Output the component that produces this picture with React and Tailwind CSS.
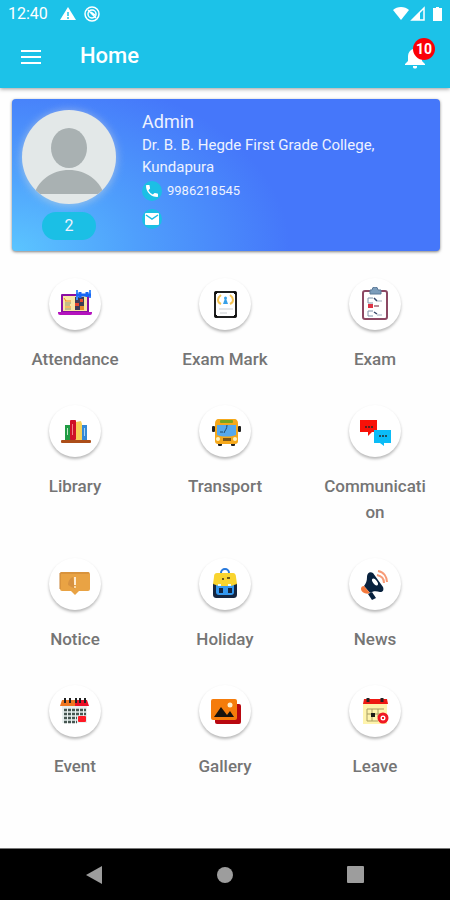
import React from "react";

function AttendanceIcon() {
  return (
    <svg viewBox="0 0 34 34" className="size-[34px]" aria-hidden="true">
      <rect x="3" y="7" width="28" height="19" rx="1" fill="#8a0fa3" />
      <rect x="5" y="9" width="24" height="15" fill="#f8e7a6" />
      <path d="M0 25h34v1a2 2 0 0 1-2 2H2a2 2 0 0 1-2-2z" fill="#b412bd" />
      <path d="M6 11l2 3M7 14h6M7 20h6" stroke="#f08a24" strokeWidth="1" fill="none" />
      <path d="M7 16h6M7 18h5M7 22h6" stroke="#8d9366" strokeWidth="1" />
      <rect x="17" y="10" width="9" height="13" fill="#3c3d55" />
      <path d="M17 16h4v3h-4zM22 12h3v3h-3z" fill="#e5482e" />
      <path d="M22 19h4v4h-4z" fill="#e98a2b" />
      <path d="M19 3v10M32 3v8" stroke="#3f8dfa" strokeWidth="2" />
      <path d="M18 8h15M22 5v6M29 5v5" stroke="#1766f5" strokeWidth="3" />
    </svg>
  );
}

function ExamMarkIcon() {
  return (
    <svg viewBox="0 0 34 34" className="size-[34px]" aria-hidden="true">
      <rect x="7" y="5" width="21" height="25" rx="1" fill="#fff" stroke="#202020" strokeWidth="2" />
      <path d="M7 5h3l-3 3zM28 5v3l-3-3zM7 30v-3l3 3zM28 30h-3l3-3z" fill="#111" stroke="#111" />
      <path d="M13 8c-4 3-4 7 0 9M22 8c4 3 4 7 0 9" stroke="#f6c453" strokeWidth="2" fill="none" />
      <circle cx="17.500" cy="11" r="1.500" fill="#38a1e8" />
      <path d="M15 17l2.500-7 2.500 7z" fill="#38a1e8" />
      <path d="M11 22h14M12 26h7" stroke="#c9cdd0" strokeWidth="1" />
    </svg>
  );
}

function ExamIcon() {
  return (
    <svg viewBox="0 0 34 34" className="size-[34px]" aria-hidden="true">
      <rect x="5" y="4" width="24" height="28" rx="2" fill="#fff" stroke="#8c4863" strokeWidth="2" />
      <path d="M12 3h2a3 3 0 0 1 6 0h3v4H12z" fill="#7c9dbb" stroke="#5d7a98" strokeWidth="1" />
      <path d="M15 11h-5v5h5M15 24h-5v5h5" stroke="#8095ab" fill="none" />
      <path d="M10 17h5v4h-5z" fill="#df3445" />
      <path d="M16 11l3 3M16 25l3 2" stroke="#354768" strokeWidth="1.500" />
      <path d="M16 19h5" stroke="#b98a95" strokeWidth="2" />
      <path d="M19 14h5M19 28h5" stroke="#9ba9bb" />
    </svg>
  );
}

function LibraryIcon() {
  return (
    <svg viewBox="0 0 34 34" className="size-[34px]" aria-hidden="true">
      <rect x="7" y="11" width="6" height="15" fill="#219c45" />
      <rect x="12" y="6" width="6" height="20" rx="1" fill="#ce1127" />
      <path d="M18 8l5-1 1 3v16h-6z" fill="#f7cf55" />
      <path d="M24 11h5v15h-5z" fill="#3488d6" />
      <path d="M9 14h1v7H9z" fill="#bce9c4" />
      <path d="M14 10h1v11h-1z" fill="#f47d87" />
      <path d="M26 14h1v8h-1z" fill="#a7d3f5" />
      <rect x="3" y="26" width="30" height="3" rx="1" fill="#ac4e19" />
    </svg>
  );
}

function TransportIcon() {
  return (
    <svg viewBox="0 0 34 34" className="size-[34px]" aria-hidden="true">
      <rect x="10" y="27" width="4" height="5" rx="1" fill="#202020" />
      <rect x="23" y="27" width="4" height="5" rx="1" fill="#202020" />
      <path d="M6 14h24" stroke="#d89018" strokeWidth="2" />
      <rect x="4" y="12" width="3" height="6" rx="1" fill="#222" />
      <rect x="30" y="12" width="3" height="6" rx="1" fill="#222" />
      <path d="M11 5h15c3 0 4 2 4 5v17c0 2-1 3-3 3H10c-2 0-3-1-3-3V10c0-3 1-5 4-5z" fill="#f5a81b" />
      <rect x="12" y="6" width="13" height="3" rx="1" fill="#79a51e" />
      <path d="M9 11h19v10c-6 2-13 2-19 0z" fill="#55a8ed" />
      <path d="M19 11c0 4-2 5-3 8M12 18h3" stroke="#214969" strokeWidth="1" fill="none" />
      <circle cx="10" cy="25" r="2" fill="#fff3be" />
      <circle cx="27" cy="25" r="2" fill="#fff3be" />
      <rect x="15" y="24" width="8" height="3" fill="#7b5618" />
    </svg>
  );
}

function CommunicationIcon() {
  return (
    <svg viewBox="0 0 34 34" className="size-[34px]" aria-hidden="true">
      <path d="M2 6h17v12h-5l-4 4v-4H2z" fill="#f81108" />
      <path d="M16 16h17v13h-7v3l-4-3h-6z" fill="#0bbcf7" />
      <path d="M7 13h8M21 22h8" stroke="#26282d" strokeWidth="1.500" strokeDasharray="2 1" />
    </svg>
  );
}

function NoticeIcon() {
  return (
    <svg viewBox="0 0 34 34" className="size-[34px]" aria-hidden="true">
      <path d="M3 5h27a2 2 0 0 1 2 2v15a2 2 0 0 1-2 2h-9l-4 4-4-4H4a2 2 0 0 1-2-2V7z" fill="#e9a344" />
      <path d="M2 22V6h29" fill="none" stroke="#c98334" strokeWidth="1" />
      <path d="M10 18c0-4 2-7 5-8l2 12z" fill="#d69140" />
      <path d="M17 10v8" stroke="#ffecd0" strokeWidth="2" />
      <path d="M17 19v2" stroke="#f9d8a8" strokeWidth="2" />
    </svg>
  );
}

function HolidayIcon() {
  return (
    <svg viewBox="0 0 34 34" className="size-[34px]" aria-hidden="true">
      <path d="M13 7V6a4 4 0 0 1 8 0v1" fill="none" stroke="#2879dc" strokeWidth="2" />
      <path d="M5 16h24v11c0 3-1 4-4 4H9c-3 0-4-1-4-4z" fill="#142641" />
      <path d="M8 18h18v7c0 2-1 3-3 3H11c-2 0-3-1-3-3z" fill="#3498ef" />
      <path d="M9 6h16c2 0 3 2 3 4l1 7-6 2H11l-6-2 1-7c0-3 1-4 3-4z" fill="#f9d42f" />
      <path d="M14 12h2M19 11h3" stroke="#6a591b" strokeWidth="2" />
      <path d="M10 17h3v2h-3zM20 17h3v2h-3z" fill="#e9fbff" />
      <rect x="11" y="21" width="4" height="5" fill="#142641" />
      <rect x="20" y="21" width="4" height="5" fill="#142641" />
    </svg>
  );
}

function NewsIcon() {
  return (
    <svg viewBox="0 0 34 34" className="size-[34px]" aria-hidden="true">
      <path d="M9 10c0-4 3-6 6-4l10 14c1 3 0 5-3 5-4-1-7-1-10 1l-6-7c2-3 3-5 3-9z" fill="#08213d" />
      <ellipse cx="17" cy="15" rx="2" ry="4" transform="rotate(-38 17 15)" fill="#fff" />
      <path d="M6 19l6 7c-4 2-9-1-9-4 0-2 1-3 3-3z" fill="#f5793b" />
      <path d="M10 27l4-2 4 6-4 2z" fill="#08213d" />
      <path d="M19 8c5 1 7 4 7 8M20 4c6 1 9 6 9 11" fill="none" stroke="#f79b77" strokeWidth="2" />
    </svg>
  );
}

function EventIcon() {
  return (
    <svg viewBox="0 0 34 34" className="size-[34px]" aria-hidden="true">
      <rect x="4" y="11" width="25" height="18" fill="#e9f0ef" />
      <path d="M4 6h13v6H2z" fill="#f07721" />
      <path d="M17 6h12l2 6H17z" fill="#eb1027" />
      <path d="M7 4v5M12 4v5M18 4v5M22 4v5M27 4v5" stroke="#222" strokeWidth="2" />
      <path d="M6 16h22M6 20h22M6 24h13M6 28h13" stroke="#465651" strokeWidth="2.500" strokeDasharray="3 1" />
      <rect x="20" y="22" width="8" height="6" rx="1" fill="#ff1925" />
    </svg>
  );
}

function GalleryIcon() {
  return (
    <svg viewBox="0 0 34 34" className="size-[34px]" aria-hidden="true">
      <rect x="7" y="10" width="26" height="20" rx="2" fill="#b90810" />
      <rect x="3" y="5" width="26" height="21" rx="2" fill="#f57c0b" />
      <circle cx="22" cy="11" r="2.500" fill="#fff0ce" />
      <path d="M6 23l7-10 6 8 3-4 4 6z" fill="#17130e" />
    </svg>
  );
}

function LeaveIcon() {
  return (
    <svg viewBox="0 0 34 34" className="size-[34px]" aria-hidden="true">
      <rect x="5" y="9" width="24" height="21" fill="#fff4ad" />
      <path d="M6 5h23l1 5H5z" fill="#ee1912" />
      <path d="M10 4v4M24 4v4" stroke="#242424" strokeWidth="3" />
      <path d="M9 15h17M9 15v12h11M9 20h17M14 15v12M20 15v8" fill="none" stroke="#a99f62" strokeWidth="1" />
      <rect x="13" y="19" width="4" height="4" fill="#1c1c16" />
      <circle cx="25" cy="24" r="4" fill="#fff" stroke="#f11822" strokeWidth="3" />
      <path d="M24 23l2 2M26 23l-2 2" stroke="#f11822" />
    </svg>
  );
}

const items = [
  { label: "Attendance", Icon: AttendanceIcon },
  { label: "Exam Mark", Icon: ExamMarkIcon },
  { label: "Exam", Icon: ExamIcon },
  { label: "Library", Icon: LibraryIcon },
  { label: "Transport", Icon: TransportIcon },
  { label: "Communication", Icon: CommunicationIcon },
  { label: "Notice", Icon: NoticeIcon },
  { label: "Holiday", Icon: HolidayIcon },
  { label: "News", Icon: NewsIcon },
  { label: "Event", Icon: EventIcon },
  { label: "Gallery", Icon: GalleryIcon },
  { label: "Leave", Icon: LeaveIcon },
];

function StatusBar() {
  return (
    <div className="flex h-7 items-center justify-between px-2">
      <div className="flex items-center gap-2">
        <span className="mr-1 text-base leading-5">12:40</span>
        <svg viewBox="0 0 16 16" className="size-4" aria-hidden="true">
          <path d="M8 1l8 13H0z" fill="currentColor" />
          <path d="M8 6v4M8 11v2" stroke="#1cc2e8" strokeWidth="1.500" />
        </svg>
        <svg viewBox="0 0 16 16" className="size-4" fill="none" stroke="currentColor" aria-hidden="true">
          <circle cx="8" cy="8" r="7" strokeWidth="1.500" />
          <circle cx="8" cy="8" r="4" strokeWidth="1.500" />
          <path d="M4 4l8 8M7 6l4 3" strokeWidth="1.500" />
        </svg>
      </div>
      <svg viewBox="0 0 50 16" className="h-4 w-[50px]" aria-hidden="true">
        <path d="M1 4c4-4 12-4 16 0L9 14z" fill="currentColor" />
        <path d="M20 14L32 2v12z" fill="none" stroke="currentColor" strokeWidth="1.500" />
        <path d="M20 14l8-8v8z" fill="currentColor" />
        <path d="M42 2h2V1h3v1h3v13h-9V2z" fill="currentColor" />
      </svg>
    </div>
  );
}

function AppBar() {
  return (
    <header className="relative bg-[#1cc2e8] text-white shadow-[0_1px_4px_rgba(0,0,0,0.4)]">
      <StatusBar />
      <div className="flex h-[60px] items-center pr-2.5 pb-1 pl-5">
        <button type="button" aria-label="Open menu" className="mr-9 flex h-10 w-6 items-center">
          <svg viewBox="0 0 24 18" className="h-[18px] w-6" aria-hidden="true">
            <path d="M1 4h20M1 10h20M1 16h20" stroke="currentColor" strokeWidth="2" />
          </svg>
        </button>
        <h1 className="flex-1 text-[22px] leading-7 font-medium">Home</h1>
        <button type="button" aria-label="Notifications" className="relative flex h-10 w-9 items-center">
          <svg viewBox="0 0 22 24" className="mt-1 h-6 w-[22px]" aria-hidden="true">
            <path d="M11 1c1 0 2 1 2 2 3 1 5 4 5 7v5l3 3v1H1v-1l3-3v-5c0-3 2-6 5-7 0-1 1-2 2-2zM9 20h4v1c0 2-4 2-4 0z" fill="currentColor" />
          </svg>
          <span className="absolute top-0.5 right-[5px] flex size-[22px] items-center justify-center rounded-full bg-[#fb0007] text-sm font-bold">10</span>
        </button>
      </div>
    </header>
  );
}

function ProfileCard() {
  return (
    <section className="mt-[11px] mr-2.5 ml-3 flex min-h-[152px] rounded-sm bg-[#4577fa] bg-[radial-gradient(ellipse_65%_120%_at_0%_100%,#5bc5ff_0%,#4f9ffc_45%,#4577fa_100%)] pt-[11px] pl-2.5 text-[#eef2ff] shadow-[0_1px_3px_rgba(0,0,0,0.5)]">
      <div className="flex w-[94px] shrink-0 flex-col items-center gap-2">
        <svg viewBox="0 0 94 94" className="size-[94px] rounded-full bg-[#e3e8e8] shadow-[0_1px_10px_rgba(220,220,220,0.6)]" role="img" aria-label="Profile picture">
          <ellipse cx="47" cy="38" rx="18" ry="20" fill="#a9b1b2" />
          <path d="M12 84c5-14 18-24 35-24s30 10 35 24z" fill="#a9b1b2" />
        </svg>
        <span className="flex h-7 w-[54px] items-center justify-center rounded-full bg-[#1bbfe5] text-base">2</span>
      </div>
      <div className="ml-[26px] min-w-0 flex-1 pr-4">
        <h2 className="text-lg leading-6">Admin</h2>
        <p className="text-[15px] leading-[22px]">Dr. B. B. Hegde First Grade College, Kundapura</p>
        <div className="mt-[3px] flex items-center gap-[5px]">
          <span className="flex size-5 items-center justify-center rounded-full bg-[#1bbfe5] text-white">
            <svg viewBox="0 0 24 24" className="size-4" aria-hidden="true">
              <path d="M6.600 10.800a15 15 0 0 0 6.600 6.600l2.200-2.200a1 1 0 0 1 1-.2 11 11 0 0 0 3.600.6 1 1 0 0 1 1 1V20a1 1 0 0 1-1 1A17 17 0 0 1 3 4a1 1 0 0 1 1-1h3.500a1 1 0 0 1 1 1 11 11 0 0 0 .6 3.600 1 1 0 0 1-.3 1z" fill="currentColor" />
            </svg>
          </span>
          <a href="tel:9986218545" className="text-[13px] leading-5">9986218545</a>
        </div>
        <span className="mt-2 flex size-5 items-center justify-center rounded-full bg-[#1bbfe5] text-white">
          <svg viewBox="0 0 16 14" className="h-3.5 w-4" aria-hidden="true">
            <rect x="1" y="1" width="14" height="12" rx="1" fill="currentColor" />
            <path d="M2 3l6 4 6-4" fill="none" stroke="#1bbfe5" strokeWidth="1.500" />
          </svg>
        </span>
      </div>
    </section>
  );
}

function NavBar() {
  return (
    <nav aria-label="System navigation" className="flex h-[52px] items-center justify-center gap-[110px] border-t border-[#777] bg-black text-[#9d9d9d]">
      <button type="button" aria-label="Back" className="flex size-5 items-center justify-center">
        <svg viewBox="0 0 18 18" className="size-[18px]" aria-hidden="true">
          <path d="M0 9L16 0v18z" fill="currentColor" />
        </svg>
      </button>
      <button type="button" aria-label="Home screen" className="flex size-5 items-center justify-center">
        <span className="size-4 rounded-full bg-current" />
      </button>
      <button type="button" aria-label="Recent apps" className="flex size-5 items-center justify-center">
        <span className="size-[17px] rounded-[1px] bg-current" />
      </button>
    </nav>
  );
}

export default function App() {
  return (
    <div className="flex min-h-screen flex-col bg-[#fefefe] font-[Roboto,sans-serif]">
      <AppBar />
      <main className="flex-1">
        <ProfileCard />
        <div className="mt-[27px] grid grid-cols-3 gap-y-[33px]">
          {items.map(({ label, Icon }) => (
            <button key={label} type="button" className="flex flex-col items-center gap-4 px-5">
              <span className="flex size-[52px] items-center justify-center rounded-full bg-white shadow-[0_2px_3px_rgba(0,0,0,0.28)]">
                <Icon />
              </span>
              <span className="w-full text-[17px] leading-[26px] font-medium break-all text-[#757575]">{label}</span>
            </button>
          ))}
        </div>
      </main>
      <NavBar />
    </div>
  );
}
